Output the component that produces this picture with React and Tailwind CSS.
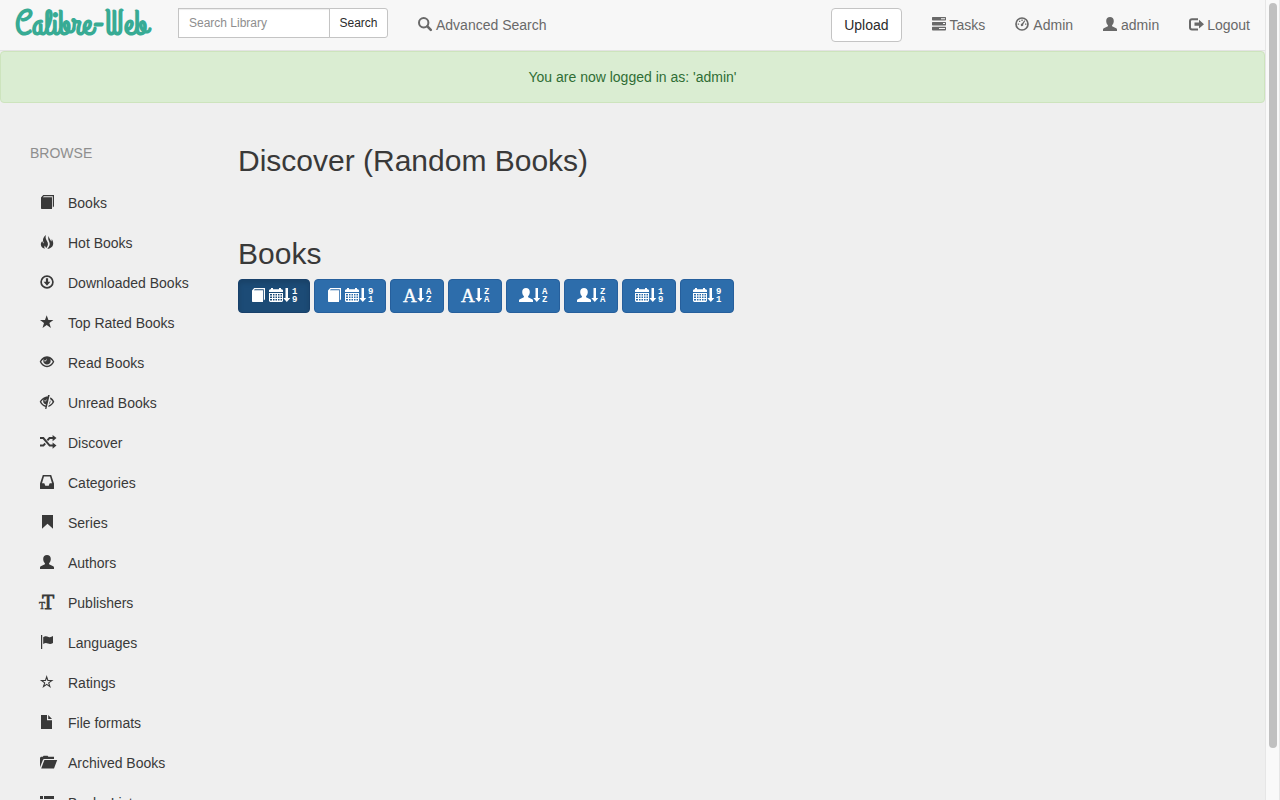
import React from 'react';

// All icons share one 14x14 grid, wider ones simply overflow it
const Icon = ({ children }) => (
    <svg viewBox="0 0 14 14" className="w-3.5 h-3.5 mb-0.5 shrink-0 overflow-visible" fill="currentColor" aria-hidden="true">
        {children}
    </svg>
);

const BookIcon = () => (
    <Icon>
        <path d="M1 2.6 3.2 0H14v11.2l-1.2 1.2V1.2H3.8L2.9 2.3H12V14H1.6L1 13.4z" />
    </Icon>
);

const FireIcon = () => (
    <Icon>
        <path d="M5.9 0C3.4 2.1 2.400 4.500 3.200 6.600L4 8.400C3 8 2.400 7 2.300 6 .8 7.400.5 9.300 1.200 11c.6 1.500 2 2.400 3.700 2.700C4 12.500 4.200 11.600 5 10.600c.2 1.100.6 1.800 1.400 2.400C7.400 11.500 8.500 10 7.700 7.600L6.400 5C5.600 3.500 5.400 2 5.900 0z" />
        <path d="M8.800 1C7.700 3.200 8.300 4.900 9.200 6.700c.9 2 .6 3.600-.5 5.200-.5.700-1 1.300-1.300 2 3-.4 5-1.800 5.600-3.900.6-1.900 0-4-1.200-5.900 0 1-.1 1.700-.6 2.300C10.700 4.700 8.900 3.700 8.800 1z" />
    </Icon>
);

const DownloadIcon = () => (
    <Icon>
        <circle cx="7" cy="7" r="5.900" fill="none" stroke="currentColor" strokeWidth="1.700" />
        <path d="M5.900 3.300h2.200v3.400h2.300L7 10.800 3.600 6.700h2.300z" />
    </Icon>
);

const StarIcon = () => (
    <Icon>
        <path d="M6.700.2 8.400 5H13.400L9.400 8 10.900 12.900 6.700 10 2.500 12.900 4 8 0 5H5z" />
    </Icon>
);

const StarEmptyIcon = () => (
    <Icon>
        <path
            d="M6.700 1.800 7.900 5.500H11.900L8.700 7.900 9.900 11.700 6.700 9.400 3.500 11.700 4.700 7.900 1.500 5.500H5.500z"
            fill="none"
            stroke="currentColor"
            strokeWidth="1.100"
        />
    </Icon>
);

const EyeIcon = () => (
    <Icon>
        <path
            fillRule="evenodd"
            d="M7 1.300C10.500 1.300 13.100 4.200 14.300 6.800 12.800 9.900 10 12.300 7 12.300S1.200 9.900-.3 6.800C.9 4.200 3.500 1.300 7 1.300zM4 3.900C2.700 4.700 1.800 5.700 1.200 6.800 2.400 9 4.500 10.800 7 10.800s4.600-1.800 5.800-4C12.200 5.700 11.300 4.700 10 3.900 10.500 4.500 10.700 5.200 10.700 6 10.700 8 9 9.600 7 9.600S3.300 8 3.300 6c0-.8.2-1.500.7-2.100zM6.500 3.500 5.900 5.600 4.700 4.900C4.300 5.600 4.500 6.300 4.900 6.600 6 6.200 7.200 5.300 6.500 3.500z"
        />
    </Icon>
);

const EyeCloseIcon = () => (
    <Icon>
        <path
            fillRule="evenodd"
            d="M9.700 0 6.400 14 5 13.700 5.500 11.900C2.900 11.300.8 9.300-.3 6.800 1 4 3.900 1.400 7.700 1.400L8 0zM3.600 4.300C2.500 5 1.800 5.800 1.200 6.800 2.200 8.600 3.900 10.100 5.800 10.500L6 9.600C3.300 9 2.500 6.300 3.600 4.300zM6.700 3.700 5.800 5.700 4.700 5C4.400 5.700 4.600 6.300 5 6.600 6 6.200 7 5.200 6.700 3.700z"
        />
        <path d="M10.500 2.200C12.400 3.200 13.600 5 14.300 6.800 13 9.500 11 11.300 8.200 12.100L8.600 10.400C10.400 9.700 11.900 8.500 12.600 6.800 12 5.500 11.100 4.600 10 3.900zM10.200 5.200C10.900 6.900 10.200 8.300 8.900 9.200z" />
    </Icon>
);

const RandomIcon = () => (
    <Icon>
        <g fill="none" stroke="currentColor" strokeWidth="2">
            <path d="M0 3.100H3.300L9.700 10.600H13" />
            <path d="M0 10.600H3.300L5.200 8.500M7.400 5.400 9.500 3.100H13" />
        </g>
        <path d="M12.600 0 16.500 3.100 12.600 6.200zM12.600 7.500 16.500 10.600 12.600 13.700z" />
    </Icon>
);

const InboxIcon = () => (
    <Icon>
        <path
            fillRule="evenodd"
            d="M2.800 0H11.200L14 8.400V13.400Q14 14 13.400 14H.6Q0 14 0 13.400V8.400zM4 1.500 2 8.200H4.300L5.300 10.800H8.700L9.700 8.200H12L10 1.500z"
        />
    </Icon>
);

const BookmarkIcon = () => (
    <Icon>
        <path d="M2 0H13V13.800L7.500 8.800 2 13.800z" />
    </Icon>
);

const UserIcon = () => (
    <Icon>
        <path d="M7 0C9.300 0 10.800 1.600 10.800 3.900 10.800 5.700 10 7.200 9.100 8.100V9.300L13.200 11.200Q14 11.600 14 12.400V14H0V12.400Q0 11.600.8 11.200L4.900 9.300V8.100C4 7.200 3.200 5.700 3.200 3.900 3.200 1.600 4.700 0 7 0z" />
    </Icon>
);

const TextSizeIcon = () => (
    <Icon>
        <g fontFamily="'Liberation Serif', serif" stroke="currentColor">
            <text x="2" y="14" fontSize="20" strokeWidth=".8">T</text>
            <text x="-1" y="14" fontSize="10" strokeWidth=".4">T</text>
        </g>
    </Icon>
);

const FlagIcon = () => (
    <Icon>
        <path d="M1 0H2.200V14H1z" />
        <path d="M3.200 2.200C5.500.4 7 1.300 8.500 1.900 10.200 2.500 11.500 2 13 1.100V7.900C11 9.300 9.500 9.200 8 8.500 6.300 7.700 5 7.800 3.200 9z" />
    </Icon>
);

const FileIcon = () => (
    <Icon>
        <path d="M1 0H7V5.300H12V14H1zM8.200 0 12 4.100H8.200z" />
    </Icon>
);

const FolderOpenIcon = () => (
    <Icon>
        <path d="M0 12.200V2.800L1 1.800H2.800L3.600.8H7.600L8.400 1.800H14V4H4.300Q3.300 4 2.900 5zM4.400 4.900H17.200L14 13.400H1.200z" />
    </Icon>
);

const ListIcon = () => (
    <Icon>
        <path d="M0 1H3V4H0zM4 1H14V4H4zM0 5.500H3V8.500H0zM4 5.500H14V8.500H4zM0 10H3V13H0zM4 10H14V13H4z" />
    </Icon>
);

const SearchIcon = () => (
    <Icon>
        <circle cx="5.700" cy="5.700" r="4.700" fill="none" stroke="currentColor" strokeWidth="2" />
        <path d="M9.400 9.400 12.800 12.800" stroke="currentColor" strokeWidth="2.600" strokeLinecap="round" />
    </Icon>
);

const TasksIcon = () => (
    <Icon>
        <path
            fillRule="evenodd"
            d="M.5 0H13.500L14 .5V3L13.500 3.600H.5L0 3V.5zM9 1.200V2.200H13V1.200zM.5 4.900H13.500L14 5.400V7.900L13.500 8.500H.5L0 7.900V5.400zM11 6.100V7.100H13V6.100zM.5 9.800H13.500L14 10.300V12.800L13.500 13.400H.5L0 12.800V10.300zM7 11V12H13V11z"
        />
    </Icon>
);

const DashboardIcon = () => (
    <Icon>
        <circle cx="7" cy="7" r="6" fill="none" stroke="currentColor" strokeWidth="1.700" />
        <path d="M2.700 6.400h1.400v1.300H2.700zM4 3.700h1.300V5H4zM6.400 2.600h1.300v1.300H6.400zM10 6.400h1.400v1.300H10zM9.500 3.300l.7.600-2 3.400a1.300 1.300 0 1 1-1.300-.7z" />
    </Icon>
);

const LogoutIcon = () => (
    <Icon>
        <path d="M9 2.200H3Q1 2.200 1 4.200V10.500Q1 12.500 3 12.500H9" fill="none" stroke="currentColor" strokeWidth="2" />
        <path d="M10 2.800 15 7.200 10 11.600V8.800H5.500V5.600H10z" />
    </Icon>
);

const CalendarIcon = () => (
    <Icon>
        <path
            fillRule="evenodd"
            d="M2 0H4V1.200H10V0H12V1.200H13L14 2.200V4H0V2.200L1 1.200H2zM0 5H14V13L13 14H1L0 13zM1 6V7.500H3V6zM4 6V7.500H5.500V6zM6.500 6V7.500H8V6zM9 6V7.500H10.500V6zM11.500 6V7.500H13V6zM1 8.500V10H3V8.500zM4 8.500V10H5.500V8.500zM6.500 8.500V10H8V8.500zM9 8.500V10H10.500V8.500zM11.500 8.500V10H13V8.500zM1 11V12.500H3V11zM4 11V12.500H5.500V11zM6.500 11V12.500H8V11zM9 11V12.500H10.500V11zM11.500 11V12.500H13V11z"
        />
    </Icon>
);

const FontIcon = () => (
    <Icon>
        <text x="0" y="13.500" fontSize="19" fontFamily="'Liberation Serif', serif" stroke="currentColor" strokeWidth=".4">A</text>
    </Icon>
);

const SortIcon = ({ top, bottom }) => (
    <Icon>
        <path d="M2.500 0H5V10H7.300L3.800 14 .3 10H2.500z" />
        <g fontSize="9" fontWeight="700" fontFamily="'Liberation Mono', monospace">
            <text x="9" y="6">{top}</text>
            <text x="9" y="14">{bottom}</text>
        </g>
    </Icon>
);

const sidebarLinks = [
    { name: 'Books', icon: BookIcon },
    { name: 'Hot Books', icon: FireIcon },
    { name: 'Downloaded Books', icon: DownloadIcon },
    { name: 'Top Rated Books', icon: StarIcon },
    { name: 'Read Books', icon: EyeIcon },
    { name: 'Unread Books', icon: EyeCloseIcon },
    { name: 'Discover', icon: RandomIcon },
    { name: 'Categories', icon: InboxIcon },
    { name: 'Series', icon: BookmarkIcon },
    { name: 'Authors', icon: UserIcon },
    { name: 'Publishers', icon: TextSizeIcon },
    { name: 'Languages', icon: FlagIcon },
    { name: 'Ratings', icon: StarEmptyIcon },
    { name: 'File formats', icon: FileIcon },
    { name: 'Archived Books', icon: FolderOpenIcon },
    { name: 'Books List', icon: ListIcon },
];

const userLinks = [
    { name: 'Tasks', icon: TasksIcon },
    { name: 'Admin', icon: DashboardIcon },
    { name: 'admin', icon: UserIcon },
    { name: 'Logout', icon: LogoutIcon },
];

const sortButtons = [
    { label: 'Newest added first', icon: CalendarIcon, book: true, top: '1', bottom: '9', active: true },
    { label: 'Oldest added first', icon: CalendarIcon, book: true, top: '9', bottom: '1' },
    { label: 'Title ascending', icon: FontIcon, top: 'A', bottom: 'Z' },
    { label: 'Title descending', icon: FontIcon, top: 'Z', bottom: 'A' },
    { label: 'Author ascending', icon: UserIcon, top: 'A', bottom: 'Z' },
    { label: 'Author descending', icon: UserIcon, top: 'Z', bottom: 'A' },
    { label: 'Publishing date ascending', icon: CalendarIcon, top: '1', bottom: '9' },
    { label: 'Publishing date descending', icon: CalendarIcon, top: '9', bottom: '1' },
];

const Navbar = () => (
    <nav className="flex items-center h-[51px] px-[15px] bg-[#f7f7f7] border-b border-[#e3e3e3] text-[#696969]">
        <a href="#home" className="w-[137px] mr-[26px] text-[35px] leading-[48px] font-bold whitespace-nowrap text-[#38ab94] font-['Grand_Hotel',cursive]">
            Calibre-Web
        </a>
        <form className="flex mb-1" role="search" onSubmit={(e) => e.preventDefault()}>
            <input
                type="text"
                aria-label="Search Library"
                placeholder="Search Library"
                className="w-[152px] h-[30px] px-2.5 text-xs bg-white border border-[#c4c4c4] shadow-[inset_0_1px_1px_rgba(0,0,0,0.075)] placeholder:text-[#8e8e8e] outline-none"
            />
            <button type="submit" className="w-[59px] h-[30px] -ml-px text-xs text-[#2b2b2b] bg-white border border-[#c4c4c4] rounded-r-[3px]">
                Search
            </button>
        </form>
        <a href="#advanced" className="flex items-center gap-1 ml-[30px]">
            <SearchIcon />
            Advanced Search
        </a>
        <div className="flex items-center gap-[30px] ml-auto">
            <button type="button" className="h-[34px] px-3 text-[#2b2b2b] bg-white border border-[#c4c4c4] rounded">
                Upload
            </button>
            {userLinks.map(({ name, icon: LinkIcon }) => (
                <a key={name} href={`#${name}`} className="flex items-center gap-1">
                    <LinkIcon />
                    {name}
                </a>
            ))}
        </div>
    </nav>
);

const Sidebar = () => (
    <aside className="w-[208px] shrink-0 pl-[30px] pt-10">
        <h4 className="leading-5 text-[#8e8e8e]">BROWSE</h4>
        <ul className="mt-5">
            {sidebarLinks.map(({ name, icon: LinkIcon }) => (
                <li key={name}>
                    <a href={`#${name}`} className="flex items-center gap-3.5 h-10 pl-2.5 whitespace-nowrap">
                        <LinkIcon />
                        {name}
                    </a>
                </li>
            ))}
        </ul>
    </aside>
);

const App = () => (
    <div className="flex h-screen overflow-hidden bg-[#efefef] text-sm text-[#393939] font-['Liberation_Sans',Arial,sans-serif]">
        <div className="flex-1 min-w-0">
            <Navbar />
            <div role="alert" className="py-[15px] text-center leading-5 text-[#2f6d35] bg-[#daedd2] border border-[#cde4bd] rounded">
                You are now logged in as: 'admin'
            </div>
            <div className="flex">
                <Sidebar />
                <main className="flex-1 pl-[30px] pr-[15px] pt-[41px]">
                    <h2 className="text-[30px] leading-[34px]">Discover (Random Books)</h2>
                    <h2 className="mt-[59px] text-[30px] leading-[34px]">Books</h2>
                    <div className="flex flex-wrap gap-1 mt-2">
                        {sortButtons.map(({ label, icon: FieldIcon, book, top, bottom, active }) => (
                            <button
                                key={label}
                                type="button"
                                aria-label={label}
                                className={`flex items-center h-[34px] px-3 text-white border rounded ${
                                    active
                                        ? 'bg-[#1c4b76] border-[#18406a] shadow-[inset_0_3px_5px_rgba(0,0,0,0.125)]'
                                        : 'bg-[#2d6dab] border-[#265f9c]'
                                }`}
                            >
                                {book && <span className="mr-1"><BookIcon /></span>}
                                <FieldIcon />
                                <SortIcon top={top} bottom={bottom} />
                            </button>
                        ))}
                    </div>
                </main>
            </div>
        </div>

        {/* Scroll track */}
        <div className="w-[15px] px-[3px] pt-[3px] bg-[#f9f9f9] border-x border-[#e6e6e6]">
            <div className="w-2 h-[93.5%] rounded-full bg-[#c0c0c0]" />
        </div>
    </div>
);

export default App;
